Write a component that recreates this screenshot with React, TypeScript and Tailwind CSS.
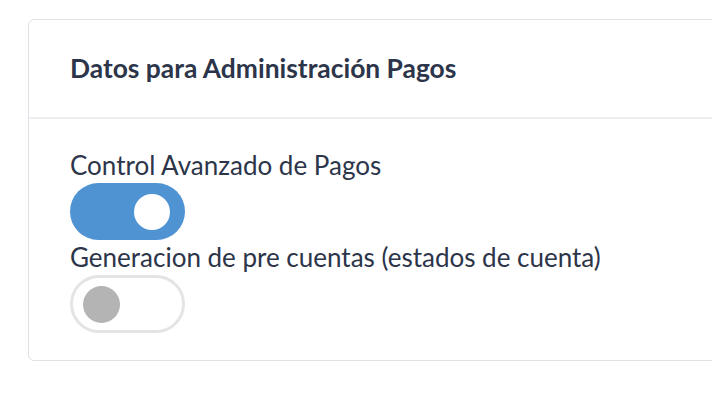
import React, { useState } from "react";

const Toggle = ({ on, onChange }: { on: boolean; onChange: () => void }) => (
  <button
    type="button"
    onClick={onChange}
    className={
      on
        ? "flex h-[57px] w-[115px] items-center justify-end rounded-full bg-[#5093d3] pr-[15px]"
        : "flex h-[58px] w-[115px] items-center justify-start rounded-full border-[3px] border-[#e4e4e4] bg-white pl-[10px]"
    }
  >
    <span
      className={
        on
          ? "block h-[36px] w-[36px] rounded-full bg-white"
          : "block h-[37px] w-[37px] rounded-full bg-[#b4b4b4]"
      }
    />
  </button>
);

export default function App() {
  const [control, setControl] = useState(true);
  const [precuentas, setPrecuentas] = useState(false);

  return (
    <div
      className="h-[404px] w-[712px] overflow-hidden bg-white pl-[28px] pt-[19px]"
      style={{ fontFamily: "Lato, 'Noto Sans', sans-serif" }}
    >
      <div className="w-[720px] rounded-md border border-[#e2e1e8] bg-white">
        <div className="flex h-[99px] items-center border-b-2 border-[#eeeef2] pl-[41px]">
          <h2 className="text-[26.4px] font-bold text-[#2c3549]">Datos para Administración Pagos</h2>
        </div>
        <div className="flex flex-col items-start pb-[27px] pl-[41px] pt-[29px] text-[#2c3549]">
          <span className="text-[26px] leading-[35px]">Control Avanzado de Pagos</span>
          <Toggle on={control} onChange={() => setControl(!control)} />
          <span className="text-[26px] leading-[35px]">Generacion de pre cuentas (estados de cuenta)</span>
          <Toggle on={precuentas} onChange={() => setPrecuentas(!precuentas)} />
        </div>
      </div>
    </div>
  );
}
